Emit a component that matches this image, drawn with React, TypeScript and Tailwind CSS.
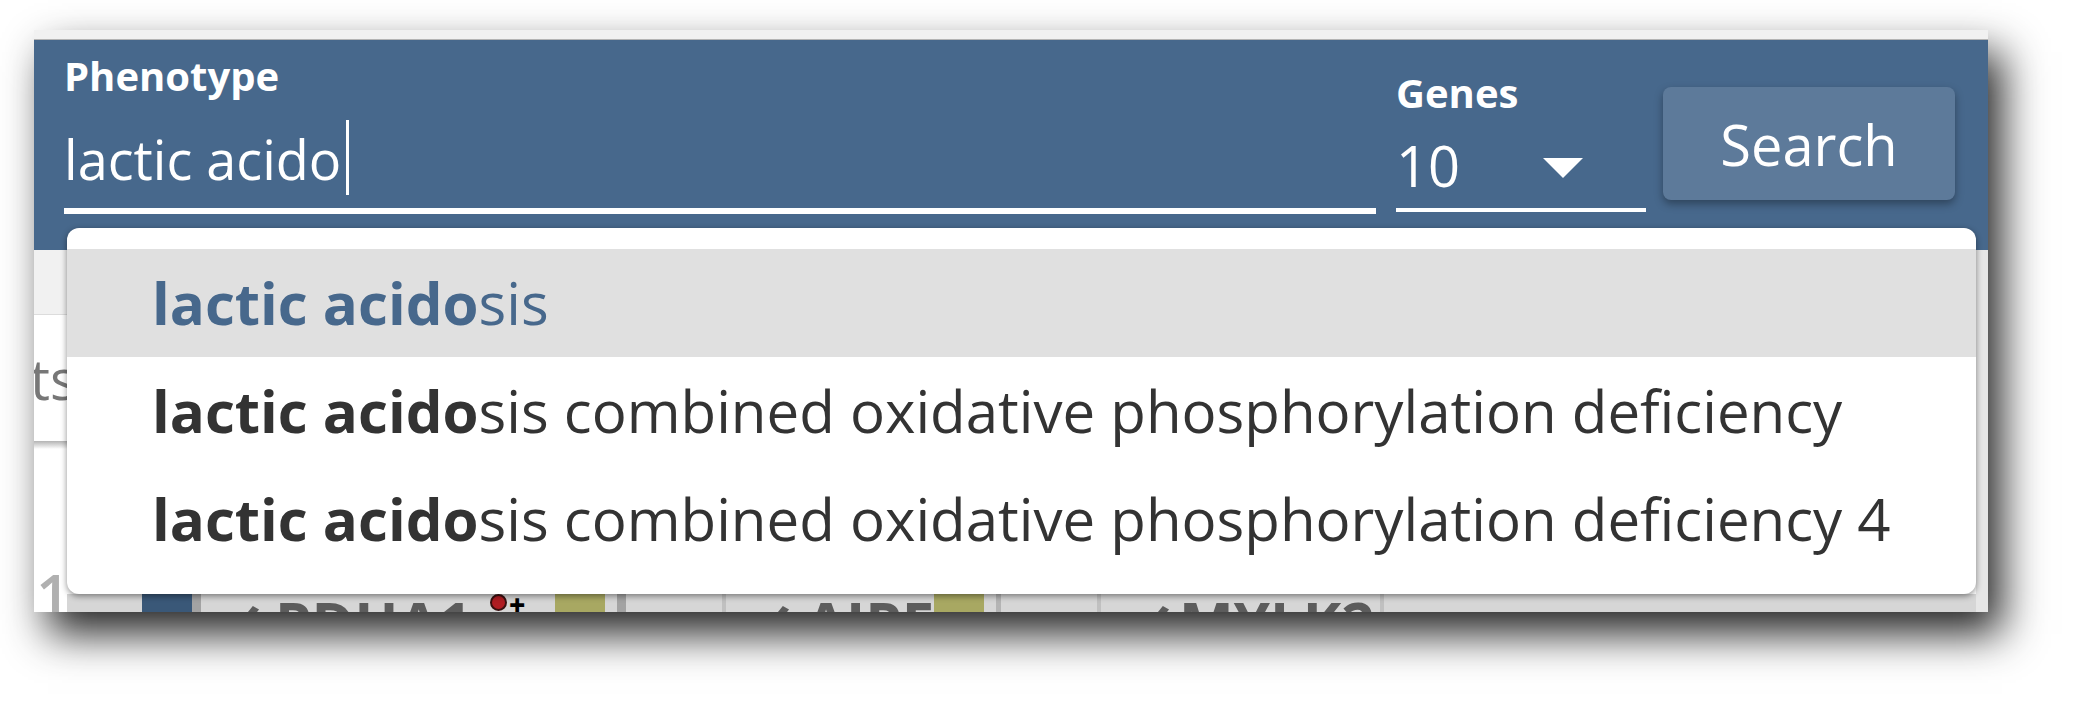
import React from 'react';

const suggestions = [
  { typed: 'lactic acido', rest: 'sis', active: true },
  { typed: 'lactic acido', rest: 'sis combined oxidative phosphorylation deficiency', active: false },
  { typed: 'lactic acido', rest: 'sis combined oxidative phosphorylation deficiency 4', active: false },
];

interface GeneChipProps {
  name: string;
  width: number;
  arrowWidth: number;
  nameWidth?: number;
  dot?: boolean;
}

const GeneChip: React.FC<GeneChipProps> = ({ name, width, arrowWidth, nameWidth, dot }) => (
  <div className="flex h-full items-start overflow-hidden" style={{ width }}>
    <span className="-mt-[10px] shrink-0 text-[58px] font-bold leading-none text-[#5c5c5c]" style={{ width: arrowWidth }}>
      ‹
    </span>
    <span className="-mt-[1px] shrink-0 text-[58px] font-bold leading-none text-[#5c5c5c]" style={{ width: nameWidth }}>
      {name}
    </span>
    {dot && (
      <div className="flex items-start">
        <span className="h-[17px] w-[17px] rounded-full border-2 border-[#3a1010] bg-[#b01c22]" />
        <span className="ml-[2px] -mt-[4px] text-[28px] font-black leading-none text-black">+</span>
      </div>
    )}
  </div>
);

export default function App() {
  return (
    <div className="h-[705px] w-[2080px] overflow-hidden bg-white pl-[34px] pt-[30px] font-['Open_Sans','Noto_Sans',sans-serif]">
      <div className="relative flex h-[582px] w-[1954px] flex-col overflow-hidden bg-white shadow-[14px_22px_40px_rgba(0,0,0,0.85)]">
        {/* top strip */}
        <div className="h-[10px] shrink-0 border-b border-[#b4b4b4] bg-[#f1f1f1]" />

        {/* search header */}
        <header className="flex h-[210px] shrink-0 items-start bg-[#47688c] pl-[30px] pr-[33px]">
          <div className="flex w-[1312px] flex-col">
            <div className="pt-[12px] text-[40px] font-bold leading-[48px] text-white">Phenotype</div>
            <div className="flex h-[114px] items-start border-b-[6px] border-white">
              <span className="mt-[32px] text-[54px] leading-[54px] text-white">lactic acido</span>
              <span className="ml-[5px] mt-[20px] h-[75px] w-[3px] bg-white" />
            </div>
          </div>

          <div className="ml-[20px] flex w-[250px] flex-col">
            <div className="pt-[29px] text-[40px] font-bold leading-[48px] text-white">Genes</div>
            <div className="flex h-[95px] items-start border-b-4 border-white">
              <span className="mt-[20px] text-[56px] leading-[56px] text-white">10</span>
              <svg className="ml-auto mr-[63px] mt-[41px]" width="40" height="20" viewBox="0 0 40 20">
                <path d="M0 0 L40 0 L20 20 Z" fill="#ffffff" />
              </svg>
            </div>
          </div>

          <button className="ml-[17px] mt-[47px] flex h-[113px] w-[292px] items-center justify-center rounded-[8px] bg-[#5d7a9a] text-[56px] leading-none text-white shadow-[0_4px_8px_rgba(0,0,0,0.35)]">
            Search
          </button>
        </header>

        {/* page content below the header, mostly hidden by the suggestion list */}
        <div className="flex flex-1">
          <div className="flex flex-1 flex-col">
            <div className="h-[65px] shrink-0 border-b border-[#dcdcdc] bg-[#f1f1f1]" />
            <div className="h-[126px] shrink-0 overflow-hidden">
              <span className="-ml-[4px] mt-[35px] block text-[56px] leading-[56px] text-[#777777]">ts</span>
            </div>
            <div className="h-[8px] shrink-0 bg-gradient-to-b from-[#b4b4b4] to-white" />
            <div className="flex flex-1">
              <div className="w-[33px] shrink-0 overflow-hidden">
                <span className="ml-[2px] mt-[116px] block text-[60px] font-semibold leading-none text-[#b0b0b0]">1</span>
              </div>
              <div className="mt-[145px] flex h-[60px] flex-1 items-stretch bg-[#d6d6d6]">
                <div className="w-[75px]" />
                <div className="w-[50px] bg-[#3a5878]" />
                <div className="w-[9px] bg-[#a3a3a3]" />
                <div className="ml-[39px]">
                  <GeneChip name="PDHA1" width={315} arrowWidth={35} nameWidth={215} dot />
                </div>
                <div className="w-[50px] bg-[#a8a862]" />
                <div className="ml-[12px] w-[9px] bg-[#a3a3a3]" />
                <div className="ml-[96px] w-[4px] bg-[#c0c0c0]" />
                <div className="ml-[44px]">
                  <GeneChip name="AIPE" width={164} arrowWidth={36} />
                </div>
                <div className="w-[50px] bg-[#a8a862]" />
                <div className="ml-[12px] w-[5px] bg-[#b4b4b4]" />
                <div className="ml-[96px] w-[4px] bg-[#c0c0c0]" />
                <div className="ml-[49px]">
                  <GeneChip name="MYLK2" width={230} arrowWidth={29} />
                </div>
                <div className="w-[4px] bg-[#c0c0c0]" />
              </div>
            </div>
          </div>
          <div className="w-[12px] shrink-0 bg-[#e6e6e6]" />
        </div>

        {/* suggestion list */}
        <ul className="absolute left-[33px] top-[198px] w-[1909px] rounded-[12px] bg-white py-[21px] shadow-[0_2px_6px_rgba(0,0,0,0.45)]">
          {suggestions.map((s, i) => (
            <li
              key={i}
              className={`flex h-[108px] items-center pl-[85px] text-[58.2px] leading-none ${
                s.active ? 'bg-[#e0e0e0] text-[#47688c]' : 'text-[#333333]'
              }`}
            >
              <span className="font-bold">{s.typed}</span>
              <span>{s.rest}</span>
            </li>
          ))}
        </ul>
      </div>
    </div>
  );
}
